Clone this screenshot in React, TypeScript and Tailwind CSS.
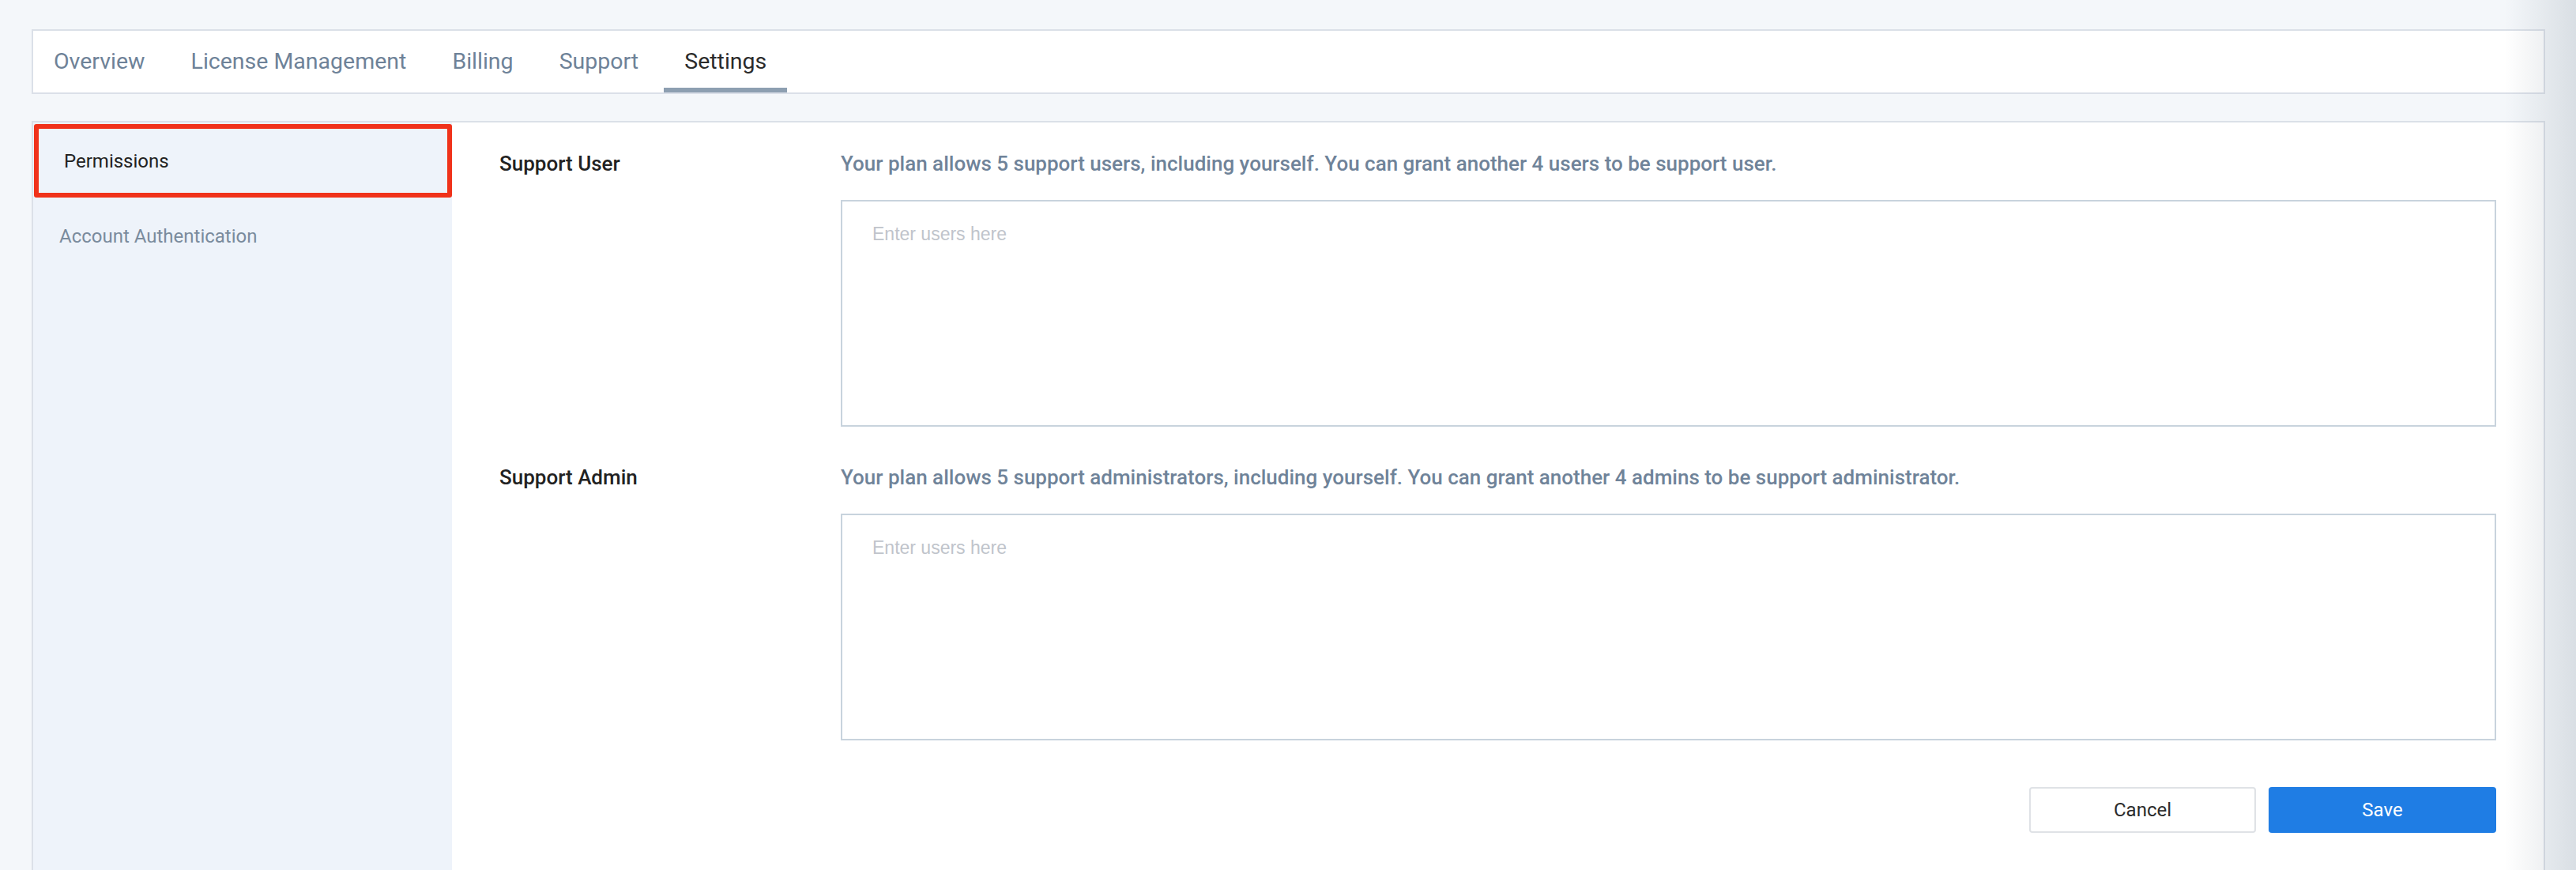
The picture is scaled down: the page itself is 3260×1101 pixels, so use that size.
import React from 'react';

const tabs = ['Overview', 'License Management', 'Billing', 'Support', 'Settings'];

const sections = [
  {
    label: 'Support User',
    hint: 'Your plan allows 5 support users, including yourself. You can grant another 4 users to be support user.',
  },
  {
    label: 'Support Admin',
    hint: 'Your plan allows 5 support administrators, including yourself. You can grant another 4 admins to be support administrator.',
  },
];

const App: React.FC = () => {
  return (
    <div className="relative min-h-[1101px] overflow-hidden bg-[#f4f7fa] pl-[40px] pr-[39px] pt-[37px] font-['Roboto',sans-serif]">
      {/* top tabs */}
      <div className="flex h-[82px] border-2 border-[#dbe0e8] bg-white">
        <div className="flex gap-[6px]">
          {tabs.map((tab) => {
            const active = tab === 'Settings';
            return (
              <div
                key={tab}
                className={`relative flex items-center px-[26px] text-[28.5px] ${active ? 'text-[#2b2b2b]' : 'text-[#6e8298]'}`}
              >
                {tab}
                {active && <span className="absolute bottom-0 left-0 right-0 h-[6px] bg-[#8d9fb1]" />}
              </div>
            );
          })}
        </div>
      </div>

      {/* settings panel */}
      <div className="mt-[34px] flex min-h-[960px] border-2 border-b-0 border-[#dbe0e8] bg-white">
        <aside className="w-[530px] shrink-0 bg-[#eef3fa] pt-[2px]">
          <div className="ml-px flex h-[93px] items-center rounded-[3px] border-[6px] border-[#f0321a] pl-[32px] text-[24px] text-[#222]">
            Permissions
          </div>
          <div className="flex h-[97px] items-center pl-[33px] text-[24px] text-[#7a8b9d]">
            Account Authentication
          </div>
        </aside>

        <main className="flex-1 pl-[60px] pr-[60px] pt-[34px]">
          {sections.map((s, i) => (
            <div key={s.label} className={`grid grid-cols-[432px_1fr] ${i > 0 ? 'mt-[46px]' : ''}`}>
              <div className="text-[26px] font-medium leading-[36px] text-[#222]">{s.label}</div>
              <div>
                <p className="text-[26px] font-medium leading-[36px] text-[#6f8399]">{s.hint}</p>
                <textarea
                  placeholder="Enter users here"
                  className="mt-[28px] block h-[287px] w-full resize-none border-2 border-[#c8d3dd] px-[38px] pt-[24px] font-['Liberation_Sans',sans-serif] text-[23px] outline-none placeholder:text-[#c0c4cb]"
                />
              </div>
            </div>
          ))}

          <div className="mt-[59px] flex justify-end gap-[16px]">
            <button className="h-[58px] w-[287px] rounded-[4px] border-2 border-[#dfe2e6] bg-white text-[24px] text-[#2b2b2b]">
              Cancel
            </button>
            <button className="h-[58px] w-[288px] rounded-[4px] bg-[#1f7de4] text-[24px] text-white">
              Save
            </button>
          </div>
        </main>
      </div>

      {/* soft edge shadow on the right */}
      <div className="pointer-events-none absolute right-0 top-0 h-full w-[90px] bg-gradient-to-r from-transparent to-[rgba(110,125,140,0.2)]" />
    </div>
  );
};

export default App;
